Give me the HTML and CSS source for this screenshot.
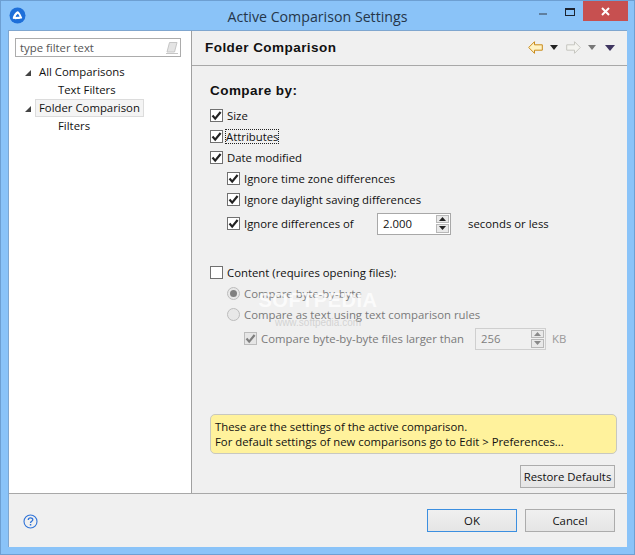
FILE: index.html
```html
<!DOCTYPE html>
<html lang="en">
<head>
<meta charset="utf-8">
<title>Active Comparison Settings</title>
<link rel="stylesheet" href="styles.css">
</head>
<body>
<svg class="defs" width="0" height="0" aria-hidden="true">
  <symbol id="tick" viewBox="0 0 13 13"><path d="M2.5 6.5 5.2 9.6 10.6 3" fill="none" stroke="currentColor" stroke-width="2.2"/></symbol>
  <symbol id="up" viewBox="0 0 7 4"><path d="M3.5 0 7 4H0z" fill="currentColor"/></symbol>
  <symbol id="down" viewBox="0 0 7 4"><path d="M0 0H7L3.5 4z" fill="currentColor"/></symbol>
</svg>
<div class="window">
  <header class="titlebar">
    <svg class="appicon" width="17" height="17" viewBox="0 0 17 17"><circle cx="8.5" cy="8.5" r="8" fill="#1e6fd9"/><path d="M3.8 11.5C3.6 9.5 6 5.2 8.6 4.2c1.300-.4 4.400 5.300 4.600 6.800.1.800-8.700 1.800-9.400.5z" fill="#fff"/><path d="M6.600 9.800c.4-1.200 1.500-2.800 2.200-3 .6.600 1.600 2 1.800 2.700-.8.300-3.200.5-4 .3z" fill="#1e6fd9"/></svg>
    <h1 class="title">Active Comparison Settings</h1>
    <div class="controls">
      <span class="ctl-min"></span>
      <span class="ctl-max"></span>
      <span class="ctl-close"><svg width="9" height="9" viewBox="0 0 9 9"><path d="M1 1 8 8M8 1 1 8" stroke="#fff" stroke-width="2"/></svg></span>
    </div>
  </header>
  <div class="client">
    <div class="main">
      <aside class="sidebar">
        <div class="filter">
          <span class="filter-text">type filter text</span>
          <svg width="14" height="14" viewBox="0 0 14 14"><path d="M4.500 1.500H12L9.500 11H2z" fill="#e4e4e4" stroke="#c6c6c6"/><path d="M1 12.500H13" stroke="#c6c6c6"/></svg>
        </div>
        <ul class="tree">
          <li class="node"><span class="twist"></span><span class="node-label">All Comparisons</span></li>
          <li class="node child"><span class="node-label">Text Filters</span></li>
          <li class="node"><span class="twist"></span><span class="node-label selected">Folder Comparison</span></li>
          <li class="node child"><span class="node-label">Filters</span></li>
        </ul>
      </aside>
      <section class="page">
        <div class="page-head">
          <h2 class="page-title">Folder Comparison</h2>
          <div class="nav">
            <svg class="arrow" width="15" height="13" viewBox="0 0 15 13"><path d="M.7 6.500 6.500.7V3.800H14.300V9.200H6.500V12.300z" fill="#fff3c4" stroke="#c98a1b"/></svg>
            <svg class="tri" width="8" height="5" viewBox="0 0 8 5"><path d="M0 0H8L4 5z" fill="#222"/></svg>
            <svg class="arrow gap" width="15" height="13" viewBox="0 0 15 13"><path d="M14.300 6.500 8.500.7V3.800H.7V9.200H8.500V12.300z" fill="#f4f4f0" stroke="#c6c6c0"/></svg>
            <svg class="tri" width="8" height="5" viewBox="0 0 8 5"><path d="M0 0H8L4 5z" fill="#777"/></svg>
            <svg class="tri menu" width="10" height="6" viewBox="0 0 10 6"><path d="M0 0H10L5 6z" fill="#3f3560"/></svg>
          </div>
        </div>
        <div class="page-body">
          <h3 class="section">Compare by:</h3>
          <div class="row"><span class="check"><svg><use href="#tick"/></svg></span><span class="label">Size</span></div>
          <div class="row"><span class="check"><svg><use href="#tick"/></svg></span><span class="label focus">Attributes</span></div>
          <div class="row"><span class="check"><svg><use href="#tick"/></svg></span><span class="label">Date modified</span></div>
          <div class="row sub"><span class="check"><svg><use href="#tick"/></svg></span><span class="label">Ignore time zone differences</span></div>
          <div class="row sub"><span class="check"><svg><use href="#tick"/></svg></span><span class="label">Ignore daylight saving differences</span></div>
          <div class="row sub tall">
            <span class="check"><svg><use href="#tick"/></svg></span><span class="label w-diff">Ignore differences of</span>
            <span class="spin s-main"><span class="spin-val">2.000</span><span class="spin-btns"><span class="spin-btn"><svg width="7" height="4"><use href="#up"/></svg></span><span class="spin-btn"><svg width="7" height="4"><use href="#down"/></svg></span></span></span>
            <span class="label after">seconds or less</span>
          </div>
          <div class="row group"><span class="check"></span><span class="label">Content (requires opening files):</span></div>
          <div class="row sub off"><span class="radio on"></span><span class="label">Compare byte-by-byte</span></div>
          <div class="row sub off"><span class="radio"></span><span class="label">Compare as text using text comparison rules</span></div>
          <div class="row sub2 tall off">
            <span class="check"><svg><use href="#tick"/></svg></span><span class="label w-larger">Compare byte-by-byte files larger than</span>
            <span class="spin s-off"><span class="spin-val">256</span><span class="spin-btns"><span class="spin-btn"><svg width="7" height="4"><use href="#up"/></svg></span><span class="spin-btn"><svg width="7" height="4"><use href="#down"/></svg></span></span></span>
            <span class="label kb">KB</span>
          </div>
          <div class="note">These are the settings of the active comparison.<br>For default settings of new comparisons go to Edit &gt; Preferences...</div>
          <div class="restore-row"><button class="btn restore" type="button">Restore Defaults</button></div>
        </div>
      </section>
    </div>
    <footer class="footer">
      <svg class="help" width="15" height="15" viewBox="0 0 15 15"><circle cx="7.500" cy="7.500" r="6.500" fill="none" stroke="#2f73d8" stroke-width="1.100"/><path d="M5.300 5.900C5.300 3.300 9.800 3.300 9.800 5.700 9.800 7.300 7.500 7.200 7.500 9" fill="none" stroke="#2f73d8" stroke-width="1.300"/><rect x="6.800" y="10" width="1.500" height="1.500" fill="#2f73d8"/></svg>
      <div class="actions">
        <button class="btn ok" type="button">OK</button>
        <button class="btn cancel" type="button">Cancel</button>
      </div>
    </footer>
  </div>
  <div class="watermark"><span class="wm-big">SOFTPEDIA</span><span class="wm-small">www.softpedia.com</span></div>
</div>
</body>
</html>
```
FILE: styles.css
```css
* { box-sizing: border-box; }
html, body { margin: 0; padding: 0; }
body { width: 635px; height: 555px; overflow: hidden; font-family: "Open Sans", "Noto Sans", sans-serif; font-size: 11.350px; color: #111; }
.defs { position: absolute; }
.window { position: relative; width: 635px; height: 555px; display: flex; flex-direction: column; background: #8ac3f8; border: 1px solid #6d9fd2; padding: 0 7px 7px; }
.titlebar { height: 29px; flex: none; display: flex; align-items: flex-start; position: relative; }
.appicon { position: absolute; left: 1px; top: 6px; }
.title { margin: 7px 0 0; width: 100%; text-align: center; font-size: 14.200px; line-height: 18px; font-weight: 400; color: #25364a; }
.controls { position: absolute; right: -1px; top: 0; display: flex; align-items: flex-start; }
.ctl-min { width: 8px; height: 2px; background: #5f7f9f; margin: 12px 18px 0 0; }
.ctl-max { width: 10px; height: 8px; border: 1px solid #1c2430; border-top-width: 2px; margin: 7px 8px 0 0; }
.ctl-close { width: 45px; height: 20px; background: #c75050; display: flex; align-items: center; justify-content: center; }
.client { flex: 1; min-height: 0; display: flex; flex-direction: column; background: #f0f0f0; border: 1px solid #7fa6cf; border-width: 1px 0 0 1px; }
.main { height: 463px; flex: none; display: flex; border-bottom: 1px solid #a8a8a8; }
.sidebar { width: 183px; flex: none; background: #fff; border-right: 1px solid #a0a0a0; padding: 7px 6px; }
.filter { height: 19px; width: 166px; border: 1px solid #acacac; display: flex; align-items: center; justify-content: space-between; padding: 0 1px 0 4px; }
.filter-text { color: #555; }
.tree { list-style: none; margin: 6px 0 0; padding: 0; }
.node { height: 18px; display: flex; align-items: center; padding-left: 11px; position: relative; }
.node.child { padding-left: 39px; }
.twist { width: 0; height: 0; border-style: solid; border-width: 0 0 6px 6px; border-color: transparent transparent #444 transparent; position: absolute; left: 10px; top: 7px; }
.node-label { padding: 0 4px; line-height: 18px; white-space: nowrap; }
.node .twist + .node-label { margin-left: 9px; }
.selected { background: #f4f4f4; outline: 1px solid #dcdcdc; outline-offset: -1px; }
.page { flex: 1; min-width: 0; display: flex; flex-direction: column; }
.page-head { height: 35px; flex: none; display: flex; align-items: center; justify-content: space-between; padding: 0 12px 1px 13px; border-bottom: 1px solid #a8a8a8; }
.page-title { margin: 0; font-family: "Liberation Sans", sans-serif; font-size: 13.500px; font-weight: 700; letter-spacing: .45px; }
.nav { display: flex; align-items: center; }
.tri { margin-left: 7px; }
.gap { margin-left: 8px; }
.menu { margin-left: 9px; }
.page-body { flex: 1; min-height: 0; display: flex; flex-direction: column; padding: 15px 10px 5px 18px; }
.section { margin: 0 0 4px; height: 20px; font-family: "Liberation Sans", sans-serif; font-size: 13.500px; line-height: 20px; font-weight: 700; letter-spacing: .45px; }
.row { height: 21px; display: flex; align-items: center; flex: none; }
.row.sub { padding-left: 17px; }
.row.sub2 { padding-left: 34px; }
.row.tall { height: 27px; }
.row.group { margin-top: 25px; }
.check { width: 13px; height: 13px; flex: none; border: 1px solid #707070; background: #fff; color: #222; position: relative; margin-right: 3px; }
.check svg { position: absolute; left: -1px; top: -1px; width: 13px; height: 13px; }
.radio { width: 13px; height: 13px; flex: none; border: 1px solid #bcbcbc; border-radius: 50%; background: #e8e8e8; margin-right: 3px; position: relative; }
.radio.on::after { content: ""; position: absolute; left: 2px; top: 2px; width: 7px; height: 7px; border-radius: 50%; background: #808080; }
.label { white-space: nowrap; padding: 0 1px; }
.focus { outline: 1px dotted #222; outline-offset: -1px; margin-left: -1px; }
.off { color: #7a7a7a; }
.off .check { border-color: #bcbcbc; background: #e6e6e6; color: #7f7f7f; }
.w-diff { width: 134px; }
.w-larger { width: 215px; }
.spin { display: flex; flex: none; height: 22px; border: 1px solid #a8a8a8; background: #fff; }
.s-main { width: 74px; }
.s-off { width: 71px; background: #f0f0f0; border-color: #cfcfcf; color: #808080; }
.spin-val { flex: 1; padding-left: 5px; line-height: 19px; }
.spin-btns { width: 15px; display: flex; flex-direction: column; gap: 1px; padding: 1px; color: #222; }
.spin-btn { flex: 1; background: #e9e9e9; border: 1px solid #b8b8b8; display: flex; align-items: center; justify-content: center; }
.s-off .spin-btns { color: #8a8a8a; }
.after { margin-left: 16px; }
.kb { margin-left: 5px; color: #999; }
.note { margin-top: auto; height: 40px; flex: none; background: #fff29c; border: 1px solid #c8c8c0; border-radius: 5px; padding: 4px 4px 0; line-height: 15px; }
.restore-row { display: flex; justify-content: flex-end; margin-top: 11px; padding-right: 2px; }
.btn { font: inherit; color: #111; background: linear-gradient(#f0f0f0, #e5e5e5); border: 1px solid #acacac; padding: 0; height: 23px; }
.restore { width: 95px; }
.footer { flex: 1; min-height: 0; display: flex; align-items: flex-start; justify-content: space-between; padding: 15px 12px 0 14px; }
.help { margin-top: 5px; }
.actions { display: flex; gap: 8px; }
.ok, .cancel { width: 90px; }
.ok { border-color: #3c8fe0; }
.watermark { position: absolute; left: 256px; top: 288px; width: 122px; display: flex; flex-direction: column; align-items: center; color: rgba(255,255,255,.75); pointer-events: none; font-family: "Liberation Sans", sans-serif; }
.wm-big { font-size: 20px; line-height: 22px; font-weight: 700; letter-spacing: .5px; }
.wm-small { font-size: 10px; line-height: 12px; margin-top: 6px; color: rgba(190,190,190,.6); }
```
